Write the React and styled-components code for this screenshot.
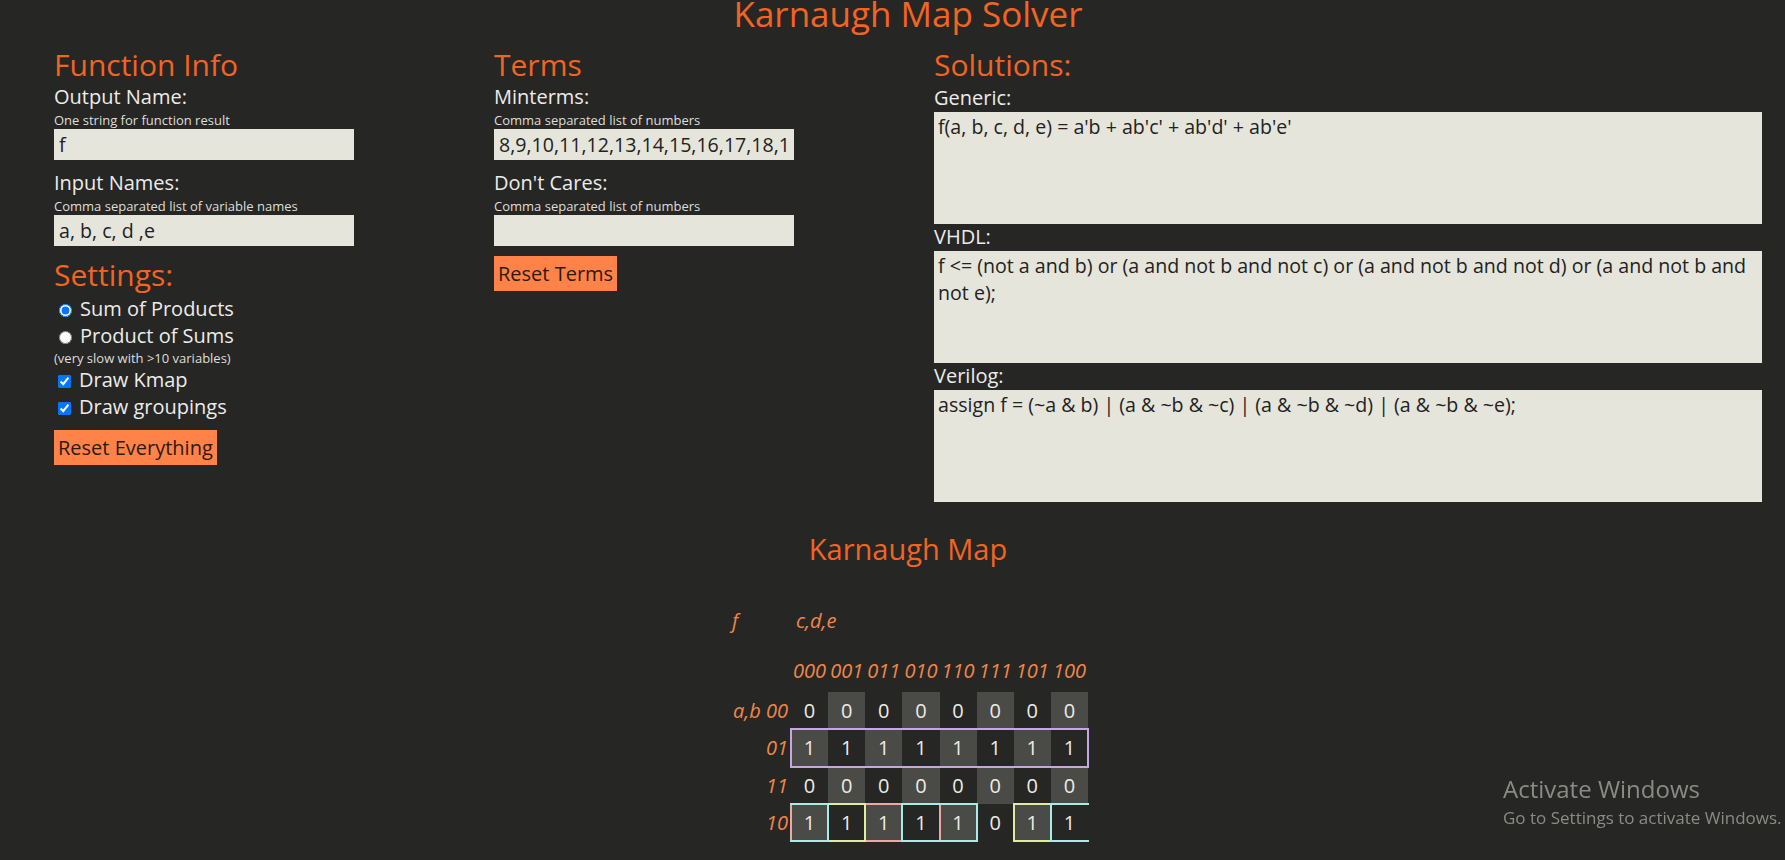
import React from "react";
import styled, { createGlobalStyle } from "styled-components";

const GlobalStyle = createGlobalStyle`
  html, body {
    margin: 0;
    padding: 0;
    background: #262624;
    overflow: hidden;
  }
  body {
    font-family: "Open Sans", "Noto Sans", sans-serif;
    color: #ececea;
  }
`;

const Page = styled.div`
  width: 1785px;
  height: 860px;
`;

const Title = styled.h1`
  margin: -3px 0 0;
  padding-left: 31px;
  text-align: center;
  font-size: 35px;
  line-height: 34px;
  font-weight: 400;
  color: #f26422;
`;

const Columns = styled.div`
  display: grid;
  grid-template-columns: 440px 440px 1fr;
  padding: 13px 23px 0 54px;
`;

const Column = styled.section`
  display: flex;
  flex-direction: column;
  align-items: ${(p) => (p.$wide ? "stretch" : "flex-start")};
`;

const Heading = styled.h2`
  margin: ${(p) => p.$top || 0}px 0 0;
  font-size: 30px;
  line-height: 41px;
  font-weight: 400;
  color: #f26422;
`;

const Label = styled.div`
  margin-top: ${(p) => (p.$top === undefined ? 0 : p.$top)}px;
  font-size: 20px;
  line-height: 24px;
`;

const Hint = styled.div`
  margin-top: ${(p) => p.$top || 3}px;
  font-size: 13px;
  line-height: 16px;
  color: #dededa;
`;

const TextInput = styled.input`
  box-sizing: border-box;
  margin-top: 1px;
  width: 300px;
  height: 31px;
  padding: 0 5px;
  border: none;
  outline: none;
  background: #e5e5dc;
  color: #222;
  font-family: inherit;
  font-size: 19.6px;
`;

const Option = styled.label`
  display: flex;
  align-items: flex-start;
  height: 27px;
  font-size: 20px;
  line-height: 27px;

  input {
    margin: 9px 8px 0 ${(p) => (p.$box ? 4 : 5)}px;
    width: 13px;
    height: 13px;
  }
`;

const Button = styled.button`
  margin-top: 10px;
  height: 35px;
  padding: 0 4px;
  border: none;
  background: #ff8248;
  color: #2a1a12;
  font-family: inherit;
  font-size: 20px;
  cursor: pointer;
`;

const Output = styled.textarea`
  box-sizing: border-box;
  display: block;
  margin-top: 2px;
  width: 100%;
  height: 112px;
  padding: 1px 4px;
  border: none;
  outline: none;
  resize: none;
  overflow: hidden;
  background: #e5e5dc;
  color: #222;
  font-family: inherit;
  font-size: 19.6px;
  line-height: 27px;
`;

const KmapSection = styled.section`
  display: flex;
  flex-direction: column;
  align-items: center;
  margin-top: 29px;
  padding-left: 31px;
`;

const KmapTitle = styled.h2`
  margin: 0;
  font-size: 29px;
  line-height: 36px;
  font-weight: 400;
  color: #f26422;
`;

const Grid = styled.div`
  display: grid;
  margin-top: 34px;
  grid-template-columns: 63px repeat(8, 37.125px);
  grid-template-rows: 49px 42px repeat(4, 37.25px);
`;

const AxisLabel = styled.div`
  grid-row: ${(p) => p.$row};
  grid-column: ${(p) => p.$col};
  align-self: ${(p) => (p.$row === 1 ? "start" : "stretch")};
  padding: ${(p) => p.$pad || "0"};
  text-align: ${(p) => p.$align || "center"};
  font-size: 20px;
  line-height: ${(p) => (p.$row === 1 ? 40 : p.$row === 2 ? 42 : 37)}px;
  font-style: italic;
  color: #f0864c;
  white-space: nowrap;
`;

const Cell = styled.div`
  grid-row: ${(p) => p.$row};
  grid-column: ${(p) => p.$col};
  background: ${(p) => (p.$shade ? "#4a4a46" : "transparent")};
  text-align: center;
  font-size: 20px;
  line-height: 37px;
  color: #ecece6;
`;

const Group = styled.div`
  grid-row: ${(p) => p.$row};
  grid-column: ${(p) => p.$col} / span ${(p) => p.$span};
  margin: -1px;
  border: 2px solid ${(p) => p.$color};
  ${(p) => (p.$openLeft ? "border-left: none;" : "")}
  ${(p) => (p.$openRight ? "border-right: none;" : "")}
  pointer-events: none;
`;

const Watermark = styled.div`
  position: fixed;
  left: 1503px;
  top: 773px;
  color: #8a8a87;
  white-space: nowrap;

  strong {
    display: block;
    font-weight: 400;
    font-size: 24px;
    line-height: 32px;
  }
  span {
    display: block;
    margin-top: 1px;
    font-size: 17px;
    line-height: 23px;
  }
`;

const colLabels = ["000", "001", "011", "010", "110", "111", "101", "100"];
const rowLabels = ["a,b 00", "01", "11", "10"];
const values = [
  [0, 0, 0, 0, 0, 0, 0, 0],
  [1, 1, 1, 1, 1, 1, 1, 1],
  [0, 0, 0, 0, 0, 0, 0, 0],
  [1, 1, 1, 1, 1, 0, 1, 1],
];

// pink c', yellow d', cyan e' (wrapping groups are split)
const groups = [
  { row: 1, col: 0, span: 8, color: "#c7a7e3" },
  { row: 3, col: 0, span: 4, color: "#efa7a4" },
  { row: 3, col: 0, span: 2, color: "#e0eca2", openLeft: true },
  { row: 3, col: 6, span: 2, color: "#e0eca2", openRight: true },
  { row: 3, col: 0, span: 1, color: "#a9ebe6", openLeft: true },
  { row: 3, col: 3, span: 2, color: "#a9ebe6" },
  { row: 3, col: 7, span: 1, color: "#a9ebe6", openRight: true },
];

const App = () => {
  return (
    <Page>
      <GlobalStyle />
      <Title>Karnaugh Map Solver</Title>
      <Columns>
        <Column>
          <Heading>Function Info</Heading>
          <Label>Output Name:</Label>
          <Hint>One string for function result</Hint>
          <TextInput defaultValue="f" />
          <Label $top={11}>Input Names:</Label>
          <Hint>Comma separated list of variable names</Hint>
          <TextInput defaultValue="a, b, c, d ,e" />
          <Heading $top={8}>Settings:</Heading>
          <Option>
            <input type="radio" name="form" defaultChecked />
            Sum of Products
          </Option>
          <Option>
            <input type="radio" name="form" />
            Product of Sums
          </Option>
          <Hint $top={1}>(very slow with &gt;10 variables)</Hint>
          <Option $box>
            <input type="checkbox" defaultChecked />
            Draw Kmap
          </Option>
          <Option $box>
            <input type="checkbox" defaultChecked />
            Draw groupings
          </Option>
          <Button>Reset Everything</Button>
        </Column>

        <Column>
          <Heading>Terms</Heading>
          <Label>Minterms:</Label>
          <Hint>Comma separated list of numbers</Hint>
          <TextInput defaultValue="8,9,10,11,12,13,14,15,16,17,18,19,20,21,22" />
          <Label $top={11}>Don't Cares:</Label>
          <Hint>Comma separated list of numbers</Hint>
          <TextInput defaultValue="" />
          <Button>Reset Terms</Button>
        </Column>

        <Column $wide>
          <Heading>Solutions:</Heading>
          <Label $top={1}>Generic:</Label>
          <Output readOnly value="f(a, b, c, d, e) = a'b + ab'c' + ab'd' + ab'e'" />
          <Label $top={1}>VHDL:</Label>
          <Output
            readOnly
            value="f <= (not a and b) or (a and not b and not c) or (a and not b and not d) or (a and not b and not e);"
          />
          <Label $top={1}>Verilog:</Label>
          <Output
            readOnly
            value="assign f = (~a & b) | (a & ~b & ~c) | (a & ~b & ~d) | (a & ~b & ~e);"
          />
        </Column>
      </Columns>

      <KmapSection>
        <KmapTitle>Karnaugh Map</KmapTitle>
        <Grid>
          <AxisLabel $row={1} $col={1} $align="left" $pad="0 0 0 4px">
            f
          </AxisLabel>
          <AxisLabel $row={1} $col="2 / span 8" $align="left" $pad="0 0 0 5px">
            c,d,e
          </AxisLabel>
          {colLabels.map((l, i) => (
            <AxisLabel key={l} $row={2} $col={i + 2}>
              {l}
            </AxisLabel>
          ))}
          {rowLabels.map((l, r) => (
            <AxisLabel key={l} $row={r + 3} $col={1} $align="right" $pad="0 3px 0 0">
              {l}
            </AxisLabel>
          ))}
          {values.map((row, r) =>
            row.map((v, c) => (
              <Cell key={`${r}-${c}`} $row={r + 3} $col={c + 2} $shade={(r + c) % 2 === 1}>
                {v}
              </Cell>
            ))
          )}
          {groups.map((g, i) => (
            <Group
              key={i}
              $row={g.row + 3}
              $col={g.col + 2}
              $span={g.span}
              $color={g.color}
              $openLeft={g.openLeft}
              $openRight={g.openRight}
            />
          ))}
        </Grid>
      </KmapSection>

      <Watermark>
        <strong>Activate Windows</strong>
        <span>Go to Settings to activate Windows.</span>
      </Watermark>
    </Page>
  );
};

export default App;
